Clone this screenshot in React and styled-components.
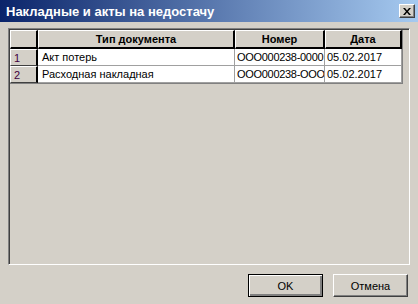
import React from 'react';
import styled, { createGlobalStyle } from 'styled-components';

const GlobalStyle = createGlobalStyle`
  html, body {
    margin: 0;
    padding: 0;
    background: #d4d0c8;
  }
  * {
    box-sizing: border-box;
  }
`;

const Window = styled.div`
  width: 418px;
  height: 304px;
  display: flex;
  flex-direction: column;
  background: #d4d0c8;
  font-family: 'Liberation Sans', Arial, sans-serif;
  font-size: 11px;
  color: #000;
  overflow: hidden;
`;

const TitleBar = styled.div`
  height: 22px;
  flex: none;
  display: flex;
  align-items: center;
  justify-content: space-between;
  padding: 0 3px 0 6px;
  background: linear-gradient(to right, #0a246a, #a6caf0);
`;

const Title = styled.span`
  color: #fff;
  font-weight: bold;
  font-size: 13px;
  white-space: nowrap;
`;

const CloseButton = styled.button`
  width: 16px;
  height: 14px;
  padding: 0;
  margin: 0;
  display: flex;
  align-items: center;
  justify-content: center;
  background: #d4d0c8;
  border: 1px solid;
  border-color: #fff #404040 #404040 #fff;
  box-shadow: inset -1px -1px 0 #808080;
`;

const Body = styled.div`
  flex: 1;
  display: flex;
  flex-direction: column;
  padding: 6px 8px 8px 8px;
`;

const GridPanel = styled.div`
  height: 237px;
  border: 1px solid;
  border-color: #808080 #fff #fff #808080;
  box-shadow: inset 1px 1px 0 #404040;
  padding: 1px 0 0 1px;
`;

const Grid = styled.div`
  display: grid;
  grid-template-columns: 28px 197px 90px 77px;
  grid-auto-rows: 17px;
  grid-template-rows: 19px;
  width: max-content;
  border-right: 1px solid #808080;
  border-bottom: 1px solid #808080;
`;

const HeadCell = styled.div`
  background: #d4d0c8;
  border-top: 1px solid #fff;
  border-left: 1px solid #fff;
  border-right: 2px solid #000;
  border-bottom: 2px solid #000;
  font-weight: bold;
  display: flex;
  align-items: center;
  justify-content: center;
  white-space: nowrap;
  overflow: hidden;
`;

const RowHead = styled.div`
  background: #d4d0c8;
  border-top: 1px solid #fff;
  border-left: 1px solid #fff;
  border-right: 2px solid #000;
  border-bottom: 1px solid #404040;
  color: #400040;
  padding-left: 3px;
  display: flex;
  align-items: center;
`;

const Cell = styled.div`
  background: #fff;
  border-right: 1px solid #a0a0a0;
  border-bottom: 1px solid #a0a0a0;
  padding-left: ${p => (p.$tight ? '2px' : '4px')};
  letter-spacing: ${p => (p.$narrow ? '-0.3px' : 'normal')};
  display: flex;
  align-items: center;
  white-space: nowrap;
  overflow: hidden;
`;

const ButtonRow = styled.div`
  display: flex;
  justify-content: flex-end;
  gap: 10px;
  margin-top: 9px;
  padding-right: 2px;
`;

const Button = styled.button`
  width: 75px;
  height: 23px;
  padding: 0;
  font-family: 'Liberation Sans', Arial, sans-serif;
  font-size: 11px;
  color: #000;
  background: #d4d0c8;
  border: 1px solid;
  border-color: ${p => (p.$default ? '#000' : '#fff #404040 #404040 #fff')};
  box-shadow: ${p =>
    p.$default
      ? 'inset 1px 1px 0 #fff, inset -2px -2px 0 #808080'
      : 'inset -1px -1px 0 #808080'};
`;

const rows = [
  { n: 1, type: 'Акт потерь', num: 'OOO000238-0000', date: '05.02.2017' },
  { n: 2, type: 'Расходная накладная', num: 'OOO000238-OOO', date: '05.02.2017' },
];

export default function App() {
  return (
    <Window>
      <GlobalStyle />
      <TitleBar>
        <Title>Накладные и акты на недостачу</Title>
        <CloseButton aria-label="Закрыть">
          <svg width="8" height="7" viewBox="0 0 8 7">
            <path d="M0 0h2l2 2.5L6 0h2L5 3.5 8 7H6L4 4.5 2 7H0l3-3.5z" fill="#000" />
          </svg>
        </CloseButton>
      </TitleBar>
      <Body>
        <GridPanel>
          <Grid>
            <HeadCell />
            <HeadCell>Тип документа</HeadCell>
            <HeadCell>Номер</HeadCell>
            <HeadCell>Дата</HeadCell>
            {rows.map(r => (
              <React.Fragment key={r.n}>
                <RowHead>{r.n}</RowHead>
                <Cell>{r.type}</Cell>
                <Cell $tight $narrow>{r.num}</Cell>
                <Cell $tight>{r.date}</Cell>
              </React.Fragment>
            ))}
          </Grid>
        </GridPanel>
        <ButtonRow>
          <Button $default>OK</Button>
          <Button>Отмена</Button>
        </ButtonRow>
      </Body>
    </Window>
  );
}
